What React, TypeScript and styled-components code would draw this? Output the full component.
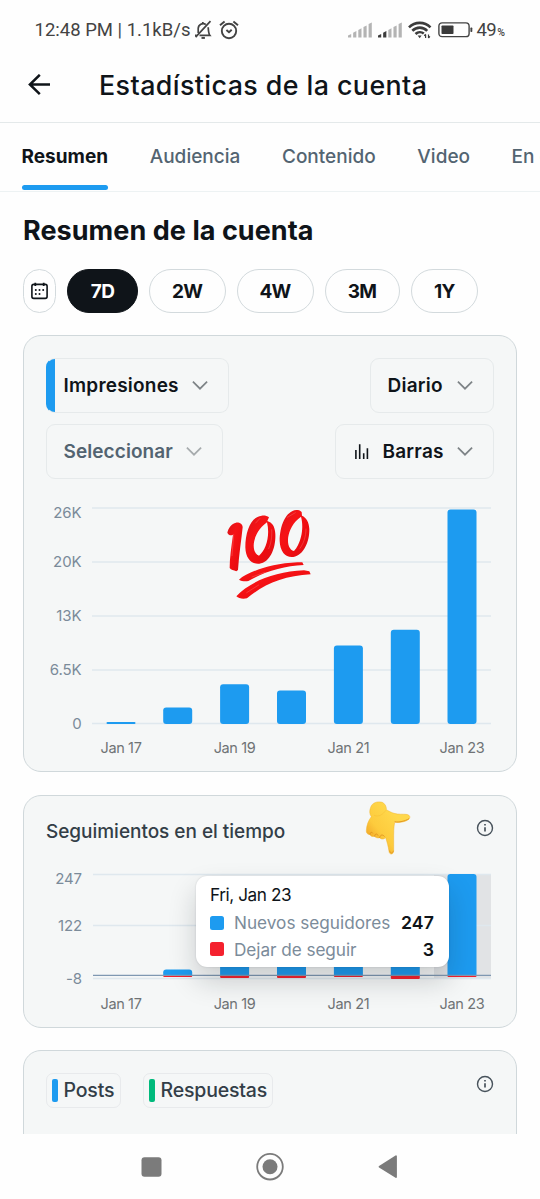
import React from 'react';
import styled, { createGlobalStyle, css } from 'styled-components';

const BLUE = '#1d9bf0';
const RED = '#f4212e';
const GREEN = '#00ba7c';
const INK = '#0f1419';
const MUTED = '#536471';
const AXIS = '#7b8b9a';

const GlobalStyle = createGlobalStyle`
  * { box-sizing: border-box; }
  html, body { margin: 0; padding: 0; background: #fefefe; }
  body { font-family: Inter, "Liberation Sans", sans-serif; color: ${INK}; }
  svg { display: block; flex: none; }
`;

const Screen = styled.div`
  width: 540px;
  height: 1199px;
  display: flex;
  flex-direction: column;
  overflow: hidden;
  background: #fefefe;
`;

/* ---------- status bar ---------- */

const StatusBar = styled.div`
  height: 60px;
  flex: none;
  display: flex;
  align-items: center;
  padding: 0 35px 0 34.5px;
  font-family: Roboto, sans-serif;
  font-size: 18.5px;
  color: #434343;
`;

const StatusText = styled.span`
  white-space: pre;
`;

const StatusIcons = styled.div`
  display: flex;
  align-items: center;
  margin: -1px 0 0 4px;
  gap: 6px;
`;

const StatusRight = styled.div`
  display: flex;
  align-items: center;
  margin-left: auto;
  gap: 6px;
`;

const Percent = styled.span`
  display: flex;
  align-items: baseline;
  letter-spacing: -0.5px;
  margin-left: -3px;
  small {
    font-size: 10.5px;
    font-weight: 500;
    margin-left: 1px;
    letter-spacing: 0;
  }
`;

/* ---------- header and tabs ---------- */

const Header = styled.header`
  height: 63px;
  flex: none;
  display: flex;
  align-items: center;
  padding: 0 0 12px 27.5px;
  border-bottom: 1px solid #e4e9ea;
`;

const Title = styled.h1`
  margin: 0 0 0 48.5px;
  font-size: 26.8px;
  line-height: 32px;
  font-weight: 500;
  letter-spacing: 0.43px;
  white-space: nowrap;
`;

const Tabs = styled.nav`
  height: 69px;
  flex: none;
  display: flex;
  gap: 41.5px;
  padding-left: 21.5px;
  border-bottom: 1px solid #edf2f3;
  overflow: hidden;
`;

const Tab = styled.div<{ $active?: boolean }>`
  flex: none;
  display: flex;
  flex-direction: column;
  font-size: 19px;
  line-height: 68px;
  font-weight: ${p => (p.$active ? 700 : 500)};
  letter-spacing: 0.02px;
  color: ${p => (p.$active ? INK : MUTED)};
  white-space: nowrap;
  ${p =>
    p.$active &&
    css`
      &::after {
        content: '';
        height: 5px;
        margin-top: -6px;
        border-radius: 3px;
        background: ${BLUE};
      }
    `}
`;

/* ---------- content ---------- */

const Content = styled.main`
  height: 942px;
  flex: none;
  padding: 23px 23px 0;
  display: flex;
  flex-direction: column;
  overflow: hidden;
`;

const Heading = styled.h2`
  margin: 0;
  flex: none;
  font-size: 27px;
  line-height: 32px;
  font-weight: 700;
  letter-spacing: 0.05px;
`;

const Chips = styled.div`
  display: flex;
  flex: none;
  gap: 11px;
  margin: 22px 0 22px;
`;

const Chip = styled.div<{ $w: number; $active?: boolean }>`
  width: ${p => p.$w}px;
  height: 44px;
  flex: none;
  display: flex;
  align-items: center;
  justify-content: center;
  border-radius: 22px;
  border: 1px solid ${p => (p.$active ? INK : '#d3dadd')};
  background: ${p => (p.$active ? INK : '#fefefe')};
  color: ${p => (p.$active ? '#fff' : INK)};
  font-size: 19px;
  font-weight: 700;
  letter-spacing: -0.7px;
`;

const Card = styled.section<{ $h: number }>`
  position: relative;
  flex: none;
  height: ${p => p.$h}px;
  margin-bottom: 22.5px;
  border: 1px solid #d0d8db;
  border-radius: 18px;
  background: #f5f7f7;
`;

const Controls = styled.div`
  display: flex;
  justify-content: space-between;
  padding: 22px 22px 0;
`;

const ControlColumn = styled.div<{ $end?: boolean }>`
  display: flex;
  flex-direction: column;
  align-items: ${p => (p.$end ? 'flex-end' : 'flex-start')};
  gap: 11px;
`;

const Select = styled.div<{ $w: number; $accent?: boolean; $muted?: boolean }>`
  width: ${p => p.$w}px;
  height: 55px;
  display: flex;
  align-items: center;
  padding: 0 20px 0 16.5px;
  border: 1px solid #e6eaeb;
  border-radius: 9px;
  overflow: hidden;
  background: ${p => (p.$accent ? `linear-gradient(to right, ${BLUE} 9px, transparent 9px)` : 'transparent')};
  background-origin: border-box;
  ${p => p.$accent && 'border-left-color: transparent;'}
  color: ${p => (p.$muted ? MUTED : INK)};
  font-size: 19px;
  font-weight: 600;
  letter-spacing: ${p => (p.$muted ? 0.08 : 0.22)}px;
`;

const SelectIcon = styled.span`
  margin: 0 13.5px 0 2.5px;
`;

const ChevronBox = styled.span<{ $faint?: boolean }>`
  margin-left: auto;
  opacity: ${p => (p.$faint ? 0.65 : 1)};
`;

const ChartText = styled.text<{ $label?: boolean }>`
  font-size: ${p => (p.$label ? 14.5 : 15)}px;
  fill: ${p => (p.$label ? '#6f7375' : AXIS)};
  text-anchor: ${p => (p.$label ? 'middle' : 'end')};
  letter-spacing: ${p => (p.$label ? '-0.35px' : '-0.1px')};
`;

const CardHead = styled.div`
  display: flex;
  justify-content: space-between;
  padding: 23px 22.5px 0 22px;
`;

const CardTitle = styled.h3`
  margin: 0;
  font-size: 19px;
  line-height: 26px;
  font-weight: 500;
  letter-spacing: -0.03px;
  color: #333e47;
`;

const Sticker = styled.div<{ $x: number; $y: number }>`
  position: absolute;
  left: ${p => p.$x}px;
  top: ${p => p.$y}px;
`;

const Tooltip = styled.div`
  position: absolute;
  left: 172px;
  top: 80px;
  width: 253px;
  height: 91px;
  padding: 6px 15px 0 14px;
  border-radius: 11px;
  background: #fff;
  box-shadow: 0 0 2px rgba(15, 20, 25, 0.16), 0 14px 28px rgba(15, 20, 25, 0.19);
`;

const TooltipTitle = styled.div`
  margin-bottom: 3px;
  font-size: 17.2px;
  line-height: 25px;
  letter-spacing: -0.42px;
`;

const TooltipRow = styled.div<{ $ls: number }>`
  display: flex;
  align-items: center;
  height: 26.5px;
  span {
    color: ${AXIS};
    letter-spacing: ${p => p.$ls}px;
    font-size: 17.2px;
  }
  b {
    margin-left: auto;
    font-size: 17.7px;
    font-weight: 600;
    letter-spacing: 0.1px;
  }
`;

const Swatch = styled.i<{ $c: string }>`
  width: 13.5px;
  height: 14px;
  margin-right: 10.5px;
  border-radius: 2.5px;
  background: ${p => p.$c};
`;

const Legend = styled.div`
  display: flex;
  gap: 22px;
  margin-top: -1px;
`;

const LegendItem = styled.div<{ $w: number; $c: string }>`
  width: ${p => p.$w}px;
  height: 35px;
  display: flex;
  align-items: center;
  padding: 0 0 1.5px 5px;
  border: 1px solid #e8eaec;
  border-radius: 7px;
  font-size: 19.5px;
  font-weight: 500;
  letter-spacing: -0.18px;
  color: #333e47;
  &::before {
    content: '';
    width: 5.5px;
    height: 22.5px;
    margin: 1px 6px 0 0;
    border-radius: 2px;
    background: ${p => p.$c};
  }
`;

const HeadIcon = styled.span<{ $drop?: boolean }>`
  margin-top: ${p => (p.$drop ? 1 : 0)}px;
`;

/* ---------- navigation bar ---------- */

const NavBar = styled.footer`
  height: 65px;
  flex: none;
  display: flex;
  align-items: center;
  justify-content: center;
  gap: 94px;
  padding-right: 1.5px;
`;

/* ---------- icons ---------- */

const BellOff = () => (
  <svg width="19" height="20" viewBox="0 0 19 20" fill="none" stroke="#434343" strokeWidth="1.7">
    <path d="M4.200 13V8.600a5 5 0 0 1 7.600-4.200M14.200 7.200c.3 4.400.3 6.400 1.700 8.200H5.500M1 15.400h1.600" />
    <path d="M8.800 3.500V2M1.600 17.200L16.500 1.200" />
    <path d="M7.500 17.900h3.400" strokeWidth="2" />
  </svg>
);

const Alarm = () => (
  <svg width="20" height="20" viewBox="0 0 20 20" fill="none" stroke="#434343" strokeWidth="1.900">
    <circle cx="10" cy="11" r="7.200" />
    <path d="M1 5.200L5.600 1.400M19 5.200L14.400 1.400" />
    <path d="M7.400 10l2.600 2.300 2.700-2.500" />
  </svg>
);

const SIGNAL_TOPS = [12.3, 9.5, 6.6, 3.8, 0.8];

const Signal = ({ lit }: { lit: number }) => (
  <svg width="24" height="16" viewBox="0 0 24 16">
    {SIGNAL_TOPS.map((top, i) => (
      <path
        key={i}
        d={`M${i * 5.15} ${top + 1.3}L${i * 5.15 + 3.2} ${top - 0.4}V15.500H${i * 5.15}Z`}
        fill={i < lit ? '#3c3c3c' : '#b4b4b4'}
      />
    ))}
  </svg>
);

const Wifi = () => (
  <svg width="24" height="18" viewBox="0 0 24 18" fill="none" stroke="#3c3c3c" strokeWidth="2.600">
    <path d="M1 6.400C7 .4 16.500.4 22.500 6.400" />
    <path d="M4.300 9.800C8.600 5.600 15 5.600 19.200 9.800" />
    <path d="M7.500 13C10 10.700 13.500 10.700 15.800 12.600" />
    <path d="M9.600 14.400L11.700 17.200L13.600 14.400Z" fill="#3c3c3c" stroke="none" />
    <path d="M17.600 13.500V17M16.300 14.800l1.300-1.600M20.500 13.500V17M20.500 17l1.400-1.600" strokeWidth="1.200" />
  </svg>
);

const Battery = () => (
  <svg width="35" height="16" viewBox="0 0 35 16">
    <rect x="0.900" y="0.900" width="30.200" height="13.700" rx="3.200" fill="none" stroke="#434343" strokeWidth="1.400" />
    <rect x="3.500" y="3.400" width="12" height="8.700" rx="0.800" fill="#3a3a3a" />
    <rect x="32.400" y="5.500" width="1.900" height="4.500" rx="0.700" fill="#434343" />
  </svg>
);

const BackArrow = () => (
  <svg width="23" height="23" viewBox="0 0 23 23" fill="none" stroke={INK} strokeWidth="2.500">
    <path d="M22 10.500H2M11.800 0.800L1.900 10.500L11.800 20.200" />
  </svg>
);

const CalendarIcon = () => (
  <svg width="17" height="18" viewBox="0 0 17 18" fill="none" stroke={INK}>
    <rect x="0.900" y="2.400" width="15.200" height="14" rx="1.800" strokeWidth="1.600" />
    <path d="M4.300 0.800V4M12.700 0.800V4" strokeWidth="1.800" />
    {[[8.5, 8], [12.2, 8], [4.8, 8], [4.8, 12], [8.5, 12]].map(([x, y], i) => (
      <circle key={i} cx={x} cy={y} r="1" fill={INK} stroke="none" />
    ))}
  </svg>
);

const Chevron = ({ faint }: { faint?: boolean }) => (
  <ChevronBox $faint={faint}>
    <svg width="16" height="9" viewBox="0 0 16 9" fill="none" stroke="#7d8386" strokeWidth="1.700">
      <path d="M0.900 0.700L8 7.700L15.100 0.700" />
    </svg>
  </ChevronBox>
);

const BarsIcon = () => (
  <svg width="14" height="15" viewBox="0 0 14 15" stroke={INK} strokeWidth="1.600">
    <path d="M.9 6V15M4.700 .2V15M8.700 9.200V15M12.400 4.200V15" />
  </svg>
);

const InfoIcon = () => (
  <svg width="18" height="18" viewBox="0 0 18 18" fill="none" stroke="#47525b" strokeWidth="1.400">
    <circle cx="9" cy="9" r="7.500" />
    <path d="M9 8.200V12.600" strokeWidth="1.700" />
    <path d="M9 5V6.600" strokeWidth="1.700" />
  </svg>
);

const HundredSticker = () => (
  <svg width="90" height="92" viewBox="50 25 270 276">
    <defs>
      <linearGradient id="brush" x1="0" y1="0" x2="1" y2="1">
        <stop offset="0" stopColor="#d9141a" />
        <stop offset="0.350" stopColor="#f61316" />
        <stop offset="0.700" stopColor="#ec0c10" />
        <stop offset="1" stopColor="#d5161b" />
      </linearGradient>
    </defs>
    <g fill="url(#brush)">
      <path d="M54 99C57 84 67 72 80 69C91 68 100 73 100 83C96 122 89 164 86 211L81 215C73 211 65 211 61 205C61 174 66 142 71 105C65 109 58 107 54 99Z" />
      <path fillRule="evenodd" d="M157 48C125 51 108 95 108 143C109 177 126 194 150 192C184 188 200 142 198 103C197 80 188 68 174 64L179 53C173 48 165 47 157 48ZM173 68C183 108 170 152 149 168C124 160 126 102 173 68Z" />
      <path fillRule="evenodd" d="M261 31C229 34 211 79 211 124C212 157 230 175 252 172C284 167 301 124 300 88C299 66 291 54 278 48L277 37C272 32 267 31 261 31ZM275 51C286 90 272 136 254 154C227 148 228 84 275 51Z" />
      <path d="M89 240C116 216 183 192 264 188L279 188L283 196C223 199 165 216 117 244C106 246 96 244 89 240Z" />
      <path d="M81 290C122 245 197 216 284 212L300 215L304 224C224 228 161 255 113 296C99 299 88 296 81 290Z" />
    </g>
    <g fill="none" stroke="#ff8f8b" strokeWidth="1.600" strokeLinecap="round" opacity="0.600">
      <path d="M73 104L68 168M139 70L152 56M187 90C189 112 184 135 178 147M234 53L258 39M290 88C290 112 282 132 272 146M128 232L166 218M112 279L148 256" />
    </g>
  </svg>
);

const HandSticker = () => (
  <svg width="46" height="56" viewBox="45 30 138 168">
    <defs>
      <linearGradient id="skin" x1="0.100" y1="0.700" x2="0.600" y2="0.200">
        <stop offset="0" stopColor="#f3ac2b" />
        <stop offset="0.350" stopColor="#fdcb3d" />
        <stop offset="1" stopColor="#ffd84b" />
      </linearGradient>
    </defs>
    <path
      fill="url(#skin)"
      stroke="#f0b52f"
      strokeWidth="1.500"
      d="M62 52C66 38 82 33 97 37C106 41 110 52 109 59C116 63 125 68 132 70C146 74 158 72 168 73C178 74 182 80 178 86C172 94 150 99 134 97C131 110 131 130 131 150L131 183C130 195 118 195 117 184C115 170 111 155 107 143C100 149 93 148 89 143C83 145 77 143 74 139C66 141 62 138 60 134C52 134 48 128 49 121C50 105 55 92 64 80C58 72 58 62 62 52Z"
    />
    <path
      fill="none"
      stroke="#d98a1c"
      strokeWidth="3"
      strokeLinecap="round"
      opacity="0.750"
      d="M60 133C60 127 65 125 68 129M74 139C74 130 82 130 84 136M89 143C90 134 98 132 103 139"
    />
    <path d="M72 76C86 82 100 73 107 61" fill="none" stroke="#efb02c" strokeWidth="2.500" opacity="0.350" />
    <path d="M134 95C146 98 166 93 177 86" fill="none" stroke="#e59a25" strokeWidth="3" />
    <path d="M119 182C121 192 129 191 130 182" fill="none" stroke="#e59a25" strokeWidth="3" />
  </svg>
);

/* ---------- charts ---------- */

const X_CENTERS = [121, 177.7, 234.6, 291.5, 348.4, 405.3, 462];
const X_LABELS = ['Jan 17', 'Jan 19', 'Jan 21', 'Jan 23'];

const IMPRESSION_TICKS = [
  { label: '26K', line: 508, base: 517.7 },
  { label: '20K', line: 562, base: 567 },
  { label: '13K', line: 616, base: 621 },
  { label: '6.5K', line: 670, base: 675 },
  { label: '0', line: 723.5, base: 728.8 },
];
const IMPRESSION_TOPS = [722, 707.5, 684.3, 690.5, 645.5, 629.8, 509.5];

const ImpressionsChart = () => (
  <svg width="492" height="292" viewBox="24 479 492 292">
    {IMPRESSION_TICKS.map(t => (
      <g key={t.label}>
        <path d={`M92 ${t.line}H491`} stroke="#dfe8ee" strokeWidth="1.300" />
        <ChartText x={81.5} y={t.base}>{t.label}</ChartText>
      </g>
    ))}
    {IMPRESSION_TOPS.map((top, i) => (
      <rect
        key={i}
        x={X_CENTERS[i] - 14.5}
        y={top}
        width="29"
        height={724 - top}
        rx={Math.min(3, (724 - top) / 2)}
        fill={BLUE}
      />
    ))}
    {X_LABELS.map((l, i) => (
      <ChartText $label key={l} x={X_CENTERS[i * 2]} y={753.2}>{l}</ChartText>
    ))}
  </svg>
);

const FOLLOW_TICKS = [
  { label: '247', line: 874.5, base: 884 },
  { label: '122', line: 925.5, base: 930.8 },
  { label: '-8', line: 978.5, base: 984 },
];
const FOLLOW_TOPS = [0, 969.5, 962, 962, 955, 950, 874];
const FOLLOW_LOWS = [0, 977, 978, 978, 977, 979, 977];

const FollowsChart = () => (
  <svg width="492" height="182" viewBox="24 845 492 182">
    <rect x="434" y="874" width="57" height="105" fill="#e1e3e5" />
    {FOLLOW_TICKS.map(t => (
      <g key={t.label}>
        <path d={`M93 ${t.line}H491`} stroke="#dfe8ee" strokeWidth="1.300" />
        <ChartText x={82} y={t.base}>{t.label}</ChartText>
      </g>
    ))}
    {FOLLOW_TOPS.map((top, i) =>
      top ? (
        <g key={i}>
          <path
            d={`M${X_CENTERS[i] - 14.5} 976V${top + 3}q0-3 3-3h23q3 0 3 3V976Z`}
            fill={BLUE}
          />
          <path
            d={`M${X_CENTERS[i] - 14.5} 975.500h29V${FOLLOW_LOWS[i] - 1}q0 1-1 1h-27q-1 0-1-1Z`}
            fill={RED}
          />
        </g>
      ) : null,
    )}
    <path d="M93 975.300H491" stroke="#7f98b2" strokeWidth="1.200" />
    {X_LABELS.map((l, i) => (
      <ChartText $label key={l} x={X_CENTERS[i * 2]} y={1008.5}>{l}</ChartText>
    ))}
  </svg>
);

export default function App() {
  return (
    <Screen>
      <GlobalStyle />
      <StatusBar>
        <StatusText>12:48 PM | 1.1kB/s</StatusText>
        <StatusIcons>
          <BellOff />
          <Alarm />
        </StatusIcons>
        <StatusRight>
          <Signal lit={0} />
          <Signal lit={2} />
          <Wifi />
          <Battery />
          <Percent>
            49<small>%</small>
          </Percent>
        </StatusRight>
      </StatusBar>

      <Header>
        <BackArrow />
        <Title>Estadísticas de la cuenta</Title>
      </Header>

      <Tabs>
        <Tab $active>Resumen</Tab>
        <Tab>Audiencia</Tab>
        <Tab>Contenido</Tab>
        <Tab>Video</Tab>
        <Tab>En c</Tab>
      </Tabs>

      <Content>
        <Heading>Resumen de la cuenta</Heading>
        <Chips>
          <Chip $w={33}><CalendarIcon /></Chip>
          <Chip $w={71} $active>7D</Chip>
          <Chip $w={76.5}>2W</Chip>
          <Chip $w={77}>4W</Chip>
          <Chip $w={75}>3M</Chip>
          <Chip $w={67.5}>1Y</Chip>
        </Chips>

        <Card $h={437}>
          <Controls>
            <ControlColumn>
              <Select $w={182.5} $accent>Impresiones<Chevron /></Select>
              <Select $w={177} $muted>Seleccionar<Chevron faint /></Select>
            </ControlColumn>
            <ControlColumn $end>
              <Select $w={124}>Diario<Chevron /></Select>
              <Select $w={159}>
                <SelectIcon><BarsIcon /></SelectIcon>
                Barras<Chevron />
              </Select>
            </ControlColumn>
          </Controls>
          <ImpressionsChart />
          <Sticker $x={202} $y={172}><HundredSticker /></Sticker>
        </Card>

        <Card $h={233}>
          <CardHead>
            <CardTitle>Seguimientos en el tiempo</CardTitle>
            <HeadIcon><InfoIcon /></HeadIcon>
          </CardHead>
          <FollowsChart />
          <Sticker $x={340.5} $y={4.5}><HandSticker /></Sticker>
          <Tooltip>
            <TooltipTitle>Fri, Jan 23</TooltipTitle>
            <TooltipRow $ls={-0.01}>
              <Swatch $c={BLUE} />
              <span>Nuevos seguidores</span>
              <b>247</b>
            </TooltipRow>
            <TooltipRow $ls={-0.06}>
              <Swatch $c={RED} />
              <span>Dejar de seguir</span>
              <b>3</b>
            </TooltipRow>
          </Tooltip>
        </Card>

        <Card $h={200}>
          <CardHead>
            <Legend>
              <LegendItem $w={75} $c={BLUE}>Posts</LegendItem>
              <LegendItem $w={130} $c={GREEN}>Respuestas</LegendItem>
            </Legend>
            <HeadIcon $drop><InfoIcon /></HeadIcon>
          </CardHead>
        </Card>
      </Content>

      <NavBar>
        <svg width="21" height="20" viewBox="0 0 21 20">
          <rect x="0.500" y="0.200" width="20" height="19.500" rx="3" fill="#7b7b7b" />
        </svg>
        <svg width="28" height="28" viewBox="0 0 28 28">
          <circle cx="14" cy="13.700" r="12.800" fill="none" stroke="#7b7b7b" strokeWidth="1.800" />
          <circle cx="14" cy="13.700" r="7.500" fill="#7b7b7b" />
        </svg>
        <svg width="20" height="24" viewBox="0 0 20 24">
          <path d="M1.500 11.700L18 1.300V22.100Z" fill="#7b7b7b" stroke="#7b7b7b" strokeWidth="1.800" strokeLinejoin="round" />
        </svg>
      </NavBar>
    </Screen>
  );
}
